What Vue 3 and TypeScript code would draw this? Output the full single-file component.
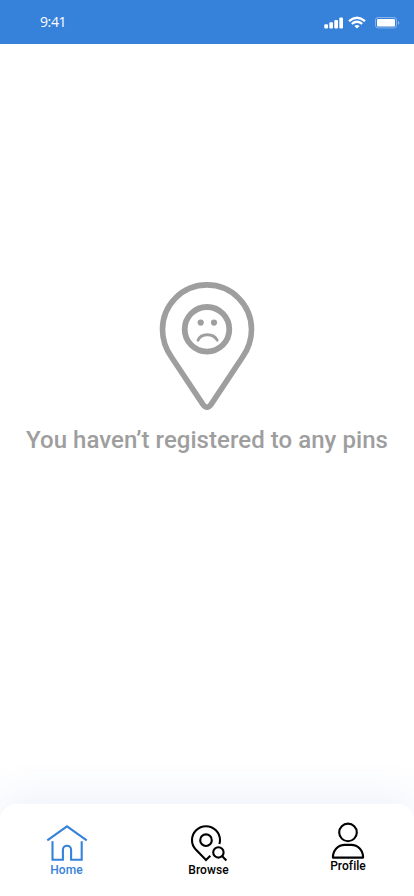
<script setup lang="ts">
import { ref } from 'vue'

type Tab = 'home' | 'browse' | 'profile'
const tabs: { id: Tab; label: string }[] = [
  { id: 'home', label: 'Home' },
  { id: 'browse', label: 'Browse' },
  { id: 'profile', label: 'Profile' },
]
const active = ref<Tab>('home')
</script>

<template>
  <div class="screen">
    <header class="status">
      <span class="time">9:41</span>
      <svg class="signals" width="78" height="14" viewBox="0 0 78 14" fill="#fff">
        <rect x="1.3" y="8.2" width="3.7" height="4.2" rx="1" />
        <rect x="6.3" y="6.2" width="3.7" height="6.2" rx="1" />
        <rect x="11.3" y="4" width="3.7" height="8.4" rx="1" />
        <rect x="16.3" y="1.6" width="3.7" height="10.8" rx="1" />
        <g fill="none" stroke="#fff" stroke-width="2.3">
          <path d="M26 5.1Q34 -1.6 42 5.1" />
          <path d="M28.8 7.9Q34 3.7 39.2 7.9" />
        </g>
        <path d="M31.4 10Q34 7.9 36.6 10L34 12.4Z" />
        <rect x="52.5" y="1.5" width="21" height="10.4" rx="2.5" fill="none" stroke="#fff" stroke-opacity=".4" />
        <rect x="54" y="3" width="18" height="7.4" rx="1.2" />
        <path d="M75 5v3.8c1.8-.8 1.8-3 0-3.8Z" fill-opacity=".45" />
      </svg>
    </header>

    <main class="empty">
      <svg class="pin" width="96" height="130" viewBox="0 0 96 130" fill="none" stroke="#9e9e9e">
        <path
          stroke-width="5.6"
          stroke-linejoin="round"
          d="M48 3.9A44.5 44.5 0 0 0 3.5 48.4C3.5 58.5 6.7 67.7 12.4 76L43.9 123.4Q48 129 52.1 123.4L83.6 76C89.3 67.7 92.5 58.5 92.5 48.4A44.5 44.5 0 0 0 48 3.9Z"
        />
        <circle cx="48" cy="48.3" r="22.3" stroke-width="5.8" />
        <path d="M39 59.2C42.2 51.9 54.4 51.9 58.2 59.2" stroke-width="2.8" stroke-linecap="round" />
        <g fill="#9e9e9e" stroke="none">
          <circle cx="41.7" cy="41.6" r="3.1" />
          <circle cx="55" cy="41.6" r="3.1" />
        </g>
      </svg>
      <p class="message">You haven’t registered to any pins</p>
    </main>

    <nav class="tabs">
      <button
        v-for="tab in tabs"
        :key="tab.id"
        type="button"
        :class="['tab', tab.id, { active: active === tab.id }]"
        @click="active = tab.id"
      >
        <svg v-if="tab.id === 'home'" width="42" height="38" viewBox="0 0 42 38">
          <path d="M1.3 15.3 21 1.3 40.7 15.3M6.5 16.2V34.8H16.9V25C16.9 19.3 25.1 19.3 25.1 25V34.8H35.7V16.2" />
        </svg>
        <svg v-else-if="tab.id === 'browse'" width="44" height="38" viewBox="0 0 44 38">
          <path d="M23.3 30.8 19 35 8.8 24.5C5.8 21.2 5 18.5 5 15.2A14 14 0 0 1 33 15.2Q33 17 32.4 19" />
          <circle cx="19" cy="15.2" r="5.8" />
          <circle cx="31.4" cy="27.4" r="5.2" />
          <path d="m35 31 4.4 4.4" />
        </svg>
        <svg v-else width="36" height="38" viewBox="0 0 36 38">
          <circle cx="18" cy="10.4" r="8.8" />
          <path d="M2.9 35.6C2.9 28.4 8 22.9 14.8 22.9H21.2C28 22.9 33.1 28.4 33.1 35.6Z" stroke-linejoin="round" />
        </svg>
        <span class="label">{{ tab.label }}</span>
      </button>
    </nav>
  </div>
</template>

<style>
body {
  margin: 0;
  background: #fff;
}
</style>

<style scoped>
.screen {
  display: flex;
  flex-direction: column;
  width: 100%;
  height: 100vh;
  overflow: hidden;
  background: #fff;
  font-family: Roboto, sans-serif;
}
.status {
  display: flex;
  flex: none;
  justify-content: space-between;
  box-sizing: border-box;
  height: 44px;
  padding: 0 13px 0 40px;
  color: #fff;
  background: #3681da;
}
.time {
  padding-top: 12px;
  font: 500 14px/19px 'Open Sans', sans-serif;
  letter-spacing: -0.4px;
}
.signals {
  margin-top: 16px;
}
.empty {
  display: flex;
  flex: 1;
  flex-direction: column;
  align-items: center;
  padding-top: 237px;
}
.pin {
  display: block;
}
.message {
  margin: 14px 0 0;
  color: #9e9e9e;
  font-size: 24px;
  font-weight: 500;
  line-height: 30px;
  letter-spacing: 0.05px;
  white-space: nowrap;
}
.tabs {
  display: flex;
  flex: none;
  justify-content: space-between;
  box-sizing: border-box;
  height: 92px;
  padding: 0 30px;
  border-radius: 16px 16px 0 0;
  background: #fff;
  box-shadow: 0 -8px 40px rgba(54, 98, 190, 0.09);
}
.tab {
  display: flex;
  flex-direction: column;
  align-items: center;
  width: 74px;
  padding: 21px 0 0;
  border: 0;
  color: #000;
  background: none;
  font-family: inherit;
}
.tab.browse {
  margin-left: 1px;
}
.tab.profile {
  width: 72px;
  padding-top: 18px;
}
.tab.active {
  color: #3681da;
}
.tab svg {
  display: block;
  flex: none;
  fill: none;
  stroke: currentColor;
  stroke-width: 2.1;
}
.label {
  font-size: 12px;
  font-weight: 500;
  line-height: 14px;
  letter-spacing: 0.05px;
}
.home .label {
  margin-right: 1px;
}
.profile .label {
  margin-top: -1px;
}
</style>
